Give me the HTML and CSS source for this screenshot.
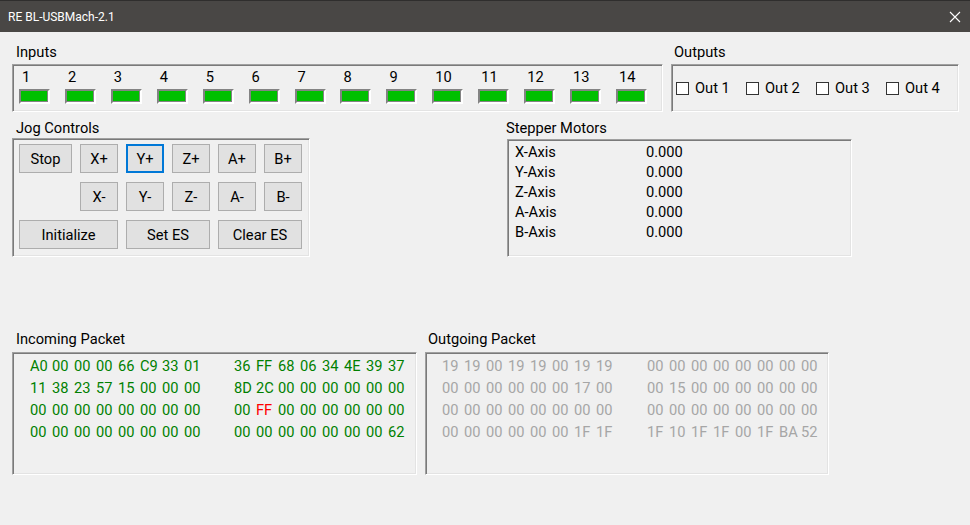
FILE: index.html
```html
<!DOCTYPE html>
<html lang="en">
<head>
<meta charset="utf-8">
<title>RE BL-USBMach-2.1</title>
<link rel="stylesheet" href="styles.css">
</head>
<body>
<div class="window">
  <header class="titlebar">
    <span class="title">RE BL-USBMach-2.1</span>
    <span class="close" aria-label="Close">
      <svg width="12" height="12" viewBox="0 0 12 12"><path d="M1 1 L11 11 M11 1 L1 11" stroke="#ffffff" stroke-width="1.1" fill="none"/></svg>
    </span>
  </header>
  <main class="client">
    <div class="row row-1">
      <section class="group g-inputs">
        <div class="group-label">Inputs</div>
        <div class="box inputs-box">
          <div class="input"><span class="num">1</span><span class="led"></span></div>
          <div class="input"><span class="num">2</span><span class="led"></span></div>
          <div class="input"><span class="num">3</span><span class="led"></span></div>
          <div class="input"><span class="num">4</span><span class="led"></span></div>
          <div class="input"><span class="num">5</span><span class="led"></span></div>
          <div class="input"><span class="num">6</span><span class="led"></span></div>
          <div class="input"><span class="num">7</span><span class="led"></span></div>
          <div class="input"><span class="num">8</span><span class="led"></span></div>
          <div class="input"><span class="num">9</span><span class="led"></span></div>
          <div class="input"><span class="num">10</span><span class="led"></span></div>
          <div class="input"><span class="num">11</span><span class="led"></span></div>
          <div class="input"><span class="num">12</span><span class="led"></span></div>
          <div class="input"><span class="num">13</span><span class="led"></span></div>
          <div class="input"><span class="num">14</span><span class="led"></span></div>
        </div>
      </section>
      <section class="group g-outputs">
        <div class="group-label">Outputs</div>
        <div class="box outputs-box">
          <label class="out"><span class="check"></span>Out 1</label>
          <label class="out"><span class="check"></span>Out 2</label>
          <label class="out"><span class="check"></span>Out 3</label>
          <label class="out"><span class="check"></span>Out 4</label>
        </div>
      </section>
    </div>

    <div class="row row-2">
      <section class="group g-jog">
        <div class="group-label">Jog Controls</div>
        <div class="box jog-box">
          <button class="btn">Stop</button>
          <button class="btn">X+</button>
          <button class="btn focused">Y+</button>
          <button class="btn">Z+</button>
          <button class="btn">A+</button>
          <button class="btn">B+</button>
          <button class="btn c2">X-</button>
          <button class="btn">Y-</button>
          <button class="btn">Z-</button>
          <button class="btn">A-</button>
          <button class="btn">B-</button>
          <button class="btn span2">Initialize</button>
          <button class="btn span2">Set ES</button>
          <button class="btn span2">Clear ES</button>
        </div>
      </section>
      <section class="group g-stepper">
        <div class="group-label">Stepper Motors</div>
        <div class="box stepper-box">
          <span>X-Axis</span><span>0.000</span>
          <span>Y-Axis</span><span>0.000</span>
          <span>Z-Axis</span><span>0.000</span>
          <span>A-Axis</span><span>0.000</span>
          <span>B-Axis</span><span>0.000</span>
        </div>
      </section>
    </div>

    <div class="row row-3">
      <section class="group g-incoming">
        <div class="group-label">Incoming Packet</div>
        <div class="box packet-box incoming">
          <div class="hex-row"><div class="hex"><span>A0</span><span>00</span><span>00</span><span>00</span><span>66</span><span>C9</span><span>33</span><span>01</span></div><div class="hex"><span>36</span><span>FF</span><span>68</span><span>06</span><span>34</span><span>4E</span><span>39</span><span>37</span></div></div>
          <div class="hex-row"><div class="hex"><span>11</span><span>38</span><span>23</span><span>57</span><span>15</span><span>00</span><span>00</span><span>00</span></div><div class="hex"><span>8D</span><span>2C</span><span>00</span><span>00</span><span>00</span><span>00</span><span>00</span><span>00</span></div></div>
          <div class="hex-row"><div class="hex"><span>00</span><span>00</span><span>00</span><span>00</span><span>00</span><span>00</span><span>00</span><span>00</span></div><div class="hex"><span>00</span><span class="alert">FF</span><span>00</span><span>00</span><span>00</span><span>00</span><span>00</span><span>00</span></div></div>
          <div class="hex-row"><div class="hex"><span>00</span><span>00</span><span>00</span><span>00</span><span>00</span><span>00</span><span>00</span><span>00</span></div><div class="hex"><span>00</span><span>00</span><span>00</span><span>00</span><span>00</span><span>00</span><span>00</span><span>62</span></div></div>
        </div>
      </section>
      <section class="group g-outgoing">
        <div class="group-label">Outgoing Packet</div>
        <div class="box packet-box outgoing">
          <div class="hex-row"><div class="hex"><span>19</span><span>19</span><span>00</span><span>19</span><span>19</span><span>00</span><span>19</span><span>19</span></div><div class="hex"><span>00</span><span>00</span><span>00</span><span>00</span><span>00</span><span>00</span><span>00</span><span>00</span></div></div>
          <div class="hex-row"><div class="hex"><span>00</span><span>00</span><span>00</span><span>00</span><span>00</span><span>00</span><span>17</span><span>00</span></div><div class="hex"><span>00</span><span>15</span><span>00</span><span>00</span><span>00</span><span>00</span><span>00</span><span>00</span></div></div>
          <div class="hex-row"><div class="hex"><span>00</span><span>00</span><span>00</span><span>00</span><span>00</span><span>00</span><span>00</span><span>00</span></div><div class="hex"><span>00</span><span>00</span><span>00</span><span>00</span><span>00</span><span>00</span><span>00</span><span>00</span></div></div>
          <div class="hex-row"><div class="hex"><span>00</span><span>00</span><span>00</span><span>00</span><span>00</span><span>00</span><span>1F</span><span>1F</span></div><div class="hex"><span>1F</span><span>10</span><span>1F</span><span>1F</span><span>00</span><span>1F</span><span>BA</span><span>52</span></div></div>
        </div>
      </section>
    </div>
  </main>
</div>
</body>
</html>
```

FILE: styles.css
```css
* { box-sizing: border-box; }

html, body {
  margin: 0;
  padding: 0;
  background: #f0f0f0;
}

body {
  font-family: "Segoe UI", Roboto, "Liberation Sans", sans-serif;
  font-size: 14.67px;
  color: #000;
}

.window {
  width: 970px;
  height: 525px;
  display: flex;
  flex-direction: column;
  background: #f0f0f0;
  overflow: hidden;
}

.titlebar {
  height: 32px;
  flex: none;
  display: flex;
  align-items: center;
  justify-content: space-between;
  padding: 0 9px 0 8px;
  background: #494745;
  border-top: 1px solid #2f2e2d;
}

.title {
  color: #ffffff;
  font-size: 12px;
  line-height: 16px;
  padding-top: 1px;
}

.close {
  display: flex;
  width: 12px;
  height: 12px;
  margin-top: 1px;
}

.client {
  padding: 10px 0 0 12px;
}

.row {
  display: flex;
  align-items: flex-start;
}

.row-1 { gap: 8px; }
.row-2 { gap: 197px; margin-top: 6px; }
.row-3 { gap: 8px; margin-top: 72px; }

.group-label {
  line-height: 20px;
  height: 20px;
  padding-left: 4px;
  white-space: nowrap;
}

.row-1 .group-label { margin-bottom: 2px; }
.row-3 .group-label { margin-bottom: 3px; }

.g-outputs .group-label { padding-left: 3px; }
.g-outgoing .group-label { padding-left: 3px; }
.g-stepper .group-label { padding-left: 0; margin-left: -1px; }

.box {
  border: 1px solid;
  border-color: #a0a0a0 #ffffff #ffffff #a0a0a0;
  box-shadow: inset 1px 1px 0 #7a7a7a, inset -1px -1px 0 #e3e3e3;
}

/* Inputs */
.g-inputs { width: 651px; }
.inputs-box {
  height: 48px;
  display: flex;
  padding: 4px 0 0 6px;
}
.input {
  width: 46px;
  display: flex;
  flex-direction: column;
  align-items: flex-start;
}
.num {
  line-height: 16px;
  height: 16px;
  padding-left: 3px;
}
.led {
  display: block;
  margin-top: 4px;
  width: 31px;
  height: 15px;
  background: #00c000;
  border: 2px solid;
  border-color: #838383 #ffffff #ffffff #838383;
  box-shadow: inset -1px -1px 0 #838383;
}

/* Outputs */
.g-outputs { width: 288px; }
.outputs-box {
  height: 48px;
  display: flex;
  align-items: center;
  padding: 0 0 0 4px;
}
.out {
  width: 70px;
  display: flex;
  align-items: center;
  gap: 6px;
  line-height: 16px;
  white-space: nowrap;
}
.check {
  width: 13px;
  height: 13px;
  flex: none;
  background: #ffffff;
  border: 1px solid #333333;
}

/* Jog controls */
.g-jog { width: 298px; }
.jog-box {
  height: 119px;
  display: grid;
  grid-template-columns: 53px repeat(5, 38px);
  grid-auto-rows: 29px;
  column-gap: 8px;
  row-gap: 9px;
  padding: 5px 0 0 6px;
}
.btn {
  font: inherit;
  color: #000;
  background: #e1e1e1;
  border: 1px solid #adadad;
  padding: 0;
  margin: 0;
  line-height: 16px;
  white-space: nowrap;
}
.btn.focused {
  border: 2px solid #0078d7;
}
.btn.c2 { grid-column-start: 2; }
.btn.span2 { grid-column: span 2; }

/* Stepper */
.g-stepper { width: 345px; }
.stepper-box {
  height: 118px;
  margin-top: 1px;
  display: grid;
  grid-template-columns: 131px auto;
  grid-auto-rows: 20px;
  align-content: start;
  padding: 2px 0 0 7px;
  line-height: 20px;
}

/* Packets */
.g-incoming { width: 405px; }
.g-outgoing { width: 404px; }
.packet-box {
  height: 123px;
  padding: 2px 0 0 17px;
}
.outgoing { padding-left: 16px; }
.hex-row {
  display: flex;
  gap: 28px;
  height: 22px;
  line-height: 22px;
}
.hex {
  display: grid;
  grid-template-columns: repeat(8, 22px);
  white-space: nowrap;
}
.incoming .hex { color: #008000; }
.incoming .hex .alert { color: #ff0000; }
.outgoing .hex { color: #a6a6a6; }
.outgoing .hex-row { gap: 29px; }
```
